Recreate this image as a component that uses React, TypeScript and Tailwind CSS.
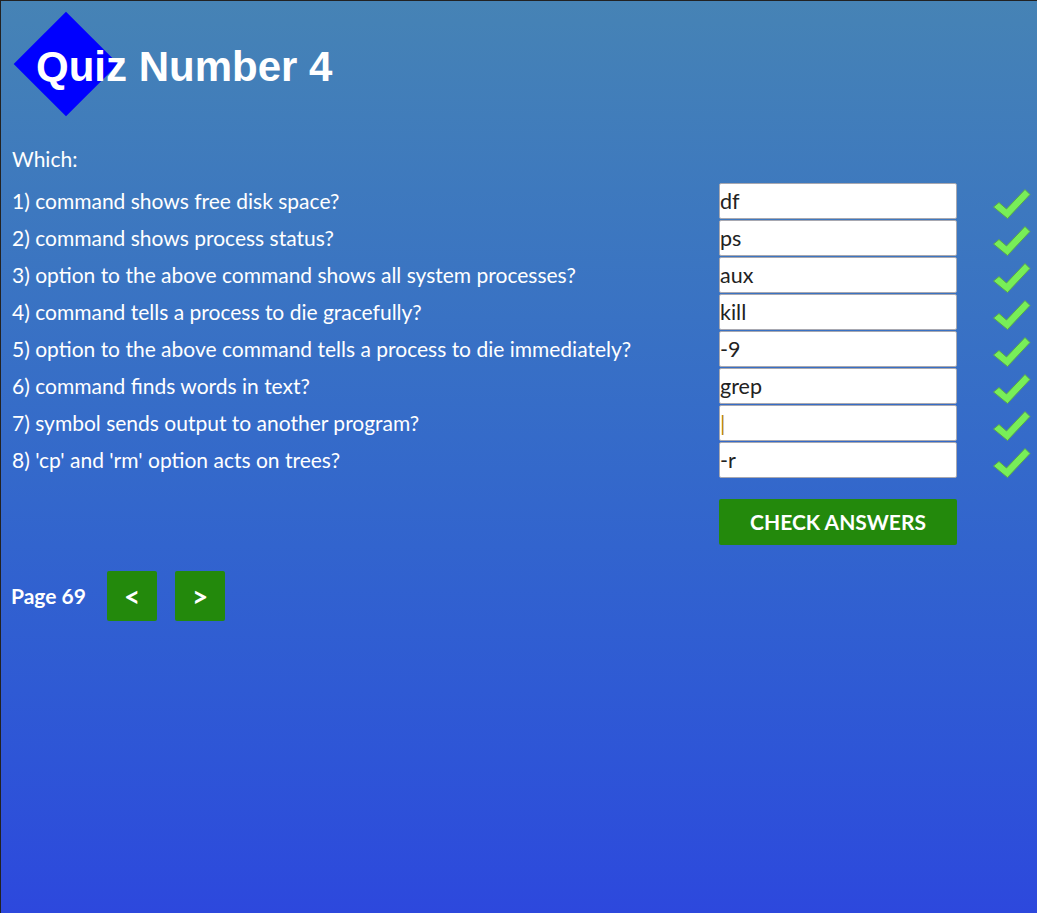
const questions = [
  { q: "1) command shows free disk space?", a: "df" },
  { q: "2) command shows process status?", a: "ps" },
  { q: "3) option to the above command shows all system processes?", a: "aux" },
  { q: "4) command tells a process to die gracefully?", a: "kill" },
  { q: "5) option to the above command tells a process to die immediately?", a: "-9" },
  { q: "6) command finds words in text?", a: "grep" },
  { q: "7) symbol sends output to another program?", a: "|" },
  { q: "8) 'cp' and 'rm' option acts on trees?", a: "-r" },
];

const Tick = () => (
  <svg width="39" height="32" viewBox="0 0 39 32" className="mt-[5px]">
    <polygon
      points="1.5,19 7,14.5 14.5,21 33,1.5 38,6.5 15.5,30.5"
      fill="#78ee58"
      stroke="#5aa84a"
      strokeWidth="1"
      strokeLinejoin="round"
    />
  </svg>
);

const App: React.FC = () => {
  return (
    <div className="min-h-screen overflow-hidden border-t border-l border-[#222] bg-linear-to-b from-[#4683b5] to-[#2d48dd] font-['Lato','Open_Sans',sans-serif] text-white">
      <header className="relative pt-[45px] pl-[35px]">
        <div className="absolute top-[26px] left-[28px] h-[74px] w-[74px] rotate-45 bg-[#0000ff]" />
        <h1 className="relative h-[42px] font-['Liberation_Sans',Arial,sans-serif] text-[42px] leading-none font-bold">
          Quiz Number 4
        </h1>
      </header>

      <main className="px-[11px]">
        <p className="mt-[59px] text-[21px] leading-6">Which:</p>

        <div className="mt-[12px] flex flex-col gap-[1px]">
          {questions.map((item) => (
            <div key={item.q} className="flex h-[36px] items-center">
              <span className="w-[707px] shrink-0 text-[21px] leading-6">{item.q}</span>
              <input
                readOnly
                value={item.a}
                className={`h-[36px] w-[238px] shrink-0 rounded-[2px] border border-[#a8a8b0] bg-white pl-0 text-[21.5px] outline-none ${
                  item.a === "|" ? "text-[#b8860b]" : "text-[#222]"
                }`}
              />
              <div className="ml-[35px] shrink-0 self-start">
                <Tick />
              </div>
            </div>
          ))}
        </div>

        <div className="mt-[21px] pl-[707px]">
          <button className="h-[46px] w-[238px] rounded-[2px] bg-[#23890c] text-[21px] font-bold text-white">
            CHECK ANSWERS
          </button>
        </div>

        <div className="mt-[26px] flex items-center">
          <span className="w-[95px] -ml-px text-[21px] font-bold">Page 69</span>
          <div className="ml-px flex gap-[18px]">
            <button className="flex h-[50px] w-[50px] items-center justify-center rounded-[2px] bg-[#23890c] text-[28px] font-bold text-white">
              &lt;
            </button>
            <button className="flex h-[50px] w-[50px] items-center justify-center rounded-[2px] bg-[#23890c] text-[28px] font-bold text-white">
              &gt;
            </button>
          </div>
        </div>
      </main>
    </div>
  );
};

export default App;
